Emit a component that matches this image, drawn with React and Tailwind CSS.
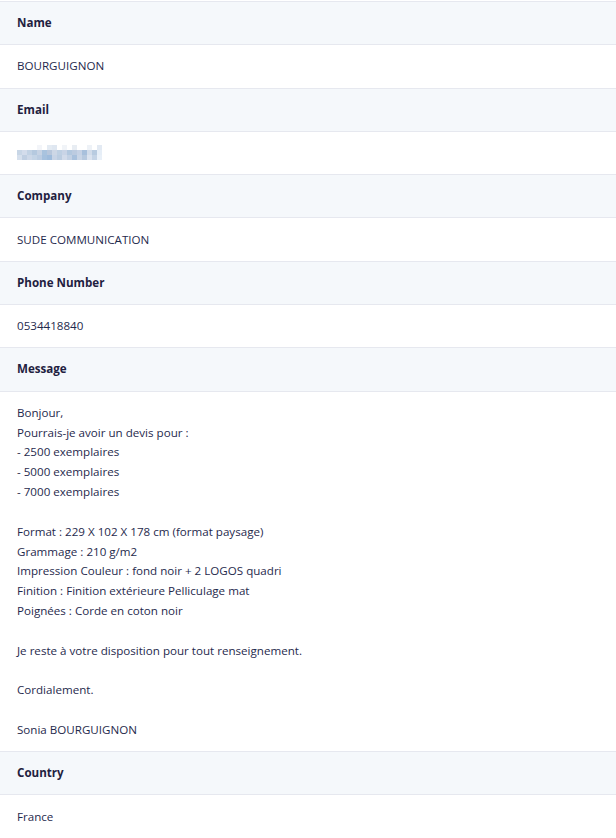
import React from "react";

const Head = ({ children }) => (
  <div className="bg-[#f5f8fb] border-b border-[#e6e8ef] px-[17px] py-[11.15px] text-[11.6px] leading-[20px] font-bold text-[#1f2140]">
    {children}
  </div>
);
const Val = ({ children }) => (
  <div className="bg-white border-b border-[#e6e8ef] px-[17px] py-[11.15px] text-[11.6px] leading-[20px] text-[#1f2a4d]">
    {children}
  </div>
);

const pix = [
  ["", "", "", "", "#f3f5f9", "", "#e4ebf3", "#dfe7f1", "", "#f1f4f8", "", "#e8edf3", "", "", "#eef2f7", "", "#e3eaf3", ""],
  ["#c8d6e6", "#d3dceb", "#c2d2e4", "#b5c9df", "#c7d3e4", "#a9c3de", "#b8c7dc", "#cdd7e6", "#bfd0e3", "#c9d4e6", "#b3c8df", "#bccbe0", "#c6d2e5", "#a8c0dc", "#d2dcea", "#b8cbe0", "#e6eef7", ""],
  ["#d6e0ed", "#c0cfe2", "#cdd8e8", "#c4d4e6", "#bccde2", "#a6c1de", "#9fbcdc", "#c8d4e6", "#bccde1", "#d2dbea", "#c3d1e4", "#a9c1dd", "#c9d5e6", "#b7c9df", "#dbe3ef", "#c5d4e6", "#e9f0f8", ""],
];

export default function App() {
  return (
    <div
      className="w-[616px] bg-white pt-[1px]"
      style={{ fontFamily: '"Open Sans", "Noto Sans", sans-serif' }}
    >
      <div className="border-t border-[#e6e8ef]">
        <Head>Name</Head>
        <Val>BOURGUIGNON</Val>
        <Head>Email</Head>
        <Val>
          <div className="h-[20px] flex items-center">
            <div className="flex flex-col">
              {pix.map((row, i) => (
                <div key={i} className="flex">
                  {row.map((c, j) => (
                    <div key={j} className="w-[5px] h-[5px]" style={{ background: c || "transparent" }} />
                  ))}
                </div>
              ))}
            </div>
          </div>
        </Val>
        <Head>Company</Head>
        <Val>SUDE COMMUNICATION</Val>
        <Head>Phone Number</Head>
        <Val>0534418840</Val>
        <Head>Message</Head>
        <Val>
          <div className="whitespace-pre-line leading-[19.85px]">
            {`Bonjour,
Pourrais-je avoir un devis pour :
- 2500 exemplaires
- 5000 exemplaires
- 7000 exemplaires

Format : 229 X 102 X 178 cm (format paysage)
Grammage : 210 g/m2
Impression Couleur : fond noir + 2 LOGOS quadri
Finition : Finition extérieure Pelliculage mat
Poignées : Corde en coton noir

Je reste à votre disposition pour tout renseignement.

Cordialement.

Sonia BOURGUIGNON`}
          </div>
        </Val>
        <Head>Country</Head>
        <Val>France</Val>
      </div>
    </div>
  );
}
